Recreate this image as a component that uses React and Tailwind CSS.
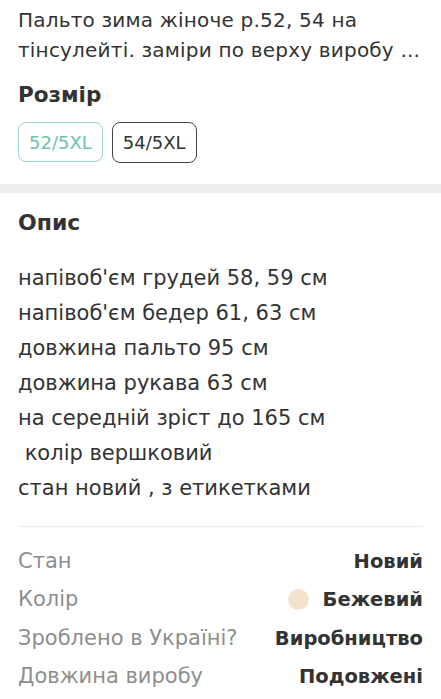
export default function App() {
  const desc = [
    "напівоб'єм грудей 58, 59 см",
    "напівоб'єм бедер 61, 63 см",
    "довжина пальто 95 см",
    "довжина рукава 63 см",
    "на середній зріст до 165 см",
    " колір вершковий",
    "стан новий , з етикетками",
  ];

  const specs = [
    { label: "Стан", value: "Новий" },
    { label: "Колір", value: "Бежевий", dot: true },
    { label: "Зроблено в Україні?", value: "Виробництво" },
    { label: "Довжина виробу", value: "Подовжені" },
  ];

  return (
    <div
      className="w-[441px] h-[699px] overflow-hidden bg-white text-[#333333]"
      style={{ fontFamily: "'DejaVu Sans', 'Noto Sans', sans-serif" }}
    >
      <div className="px-[18px] pt-[5px]">
        <p className="text-[20px] tracking-[0.2px] leading-[30px] whitespace-nowrap">
          Пальто зима жіноче р.52, 54 на
          <br />
          тінсулейті. заміри по верху виробу ...
        </p>
        <h2 className="mt-[15px] text-[21.5px] leading-[30px] font-bold">Розмір</h2>
        <div className="mt-[12px] flex gap-[9px]">
          <div className="h-[40px] px-[10px] flex items-center rounded-[8px] border border-[#9ad8c4] text-[#6fc4a6] text-[18px]">
            52/5XL
          </div>
          <div className="h-[41px] px-[10px] flex items-center rounded-[8px] border border-[#444444] text-[#333333] text-[18px]">
            54/5XL
          </div>
        </div>
      </div>

      <div className="mt-[21px] h-[9px] bg-[#efefef]" />

      <div className="px-[18px]">
        <h2 className="mt-[15px] text-[22px] leading-[30px] font-bold">Опис</h2>
        <div className="mt-[23px]">
          {desc.map((line, i) => (
            <p key={i} className="text-[21px] leading-[35px] whitespace-pre">
              {line}
            </p>
          ))}
        </div>
        <div className="mt-[20px] h-px bg-[#ebebeb]" />
        <div className="mt-[15px]">
          {specs.map((s) => (
            <div key={s.label} className="h-[38.5px] flex items-center justify-between">
              <span className="text-[21px] text-[#8e8e8e]">{s.label}</span>
              <span className="flex items-center gap-[14px] text-[19.5px] font-bold text-[#333333]">
                {s.dot && <span className="w-[21px] h-[21px] rounded-full bg-[#f6e3cf]" />}
                {s.value}
              </span>
            </div>
          ))}
        </div>
      </div>
    </div>
  );
}
